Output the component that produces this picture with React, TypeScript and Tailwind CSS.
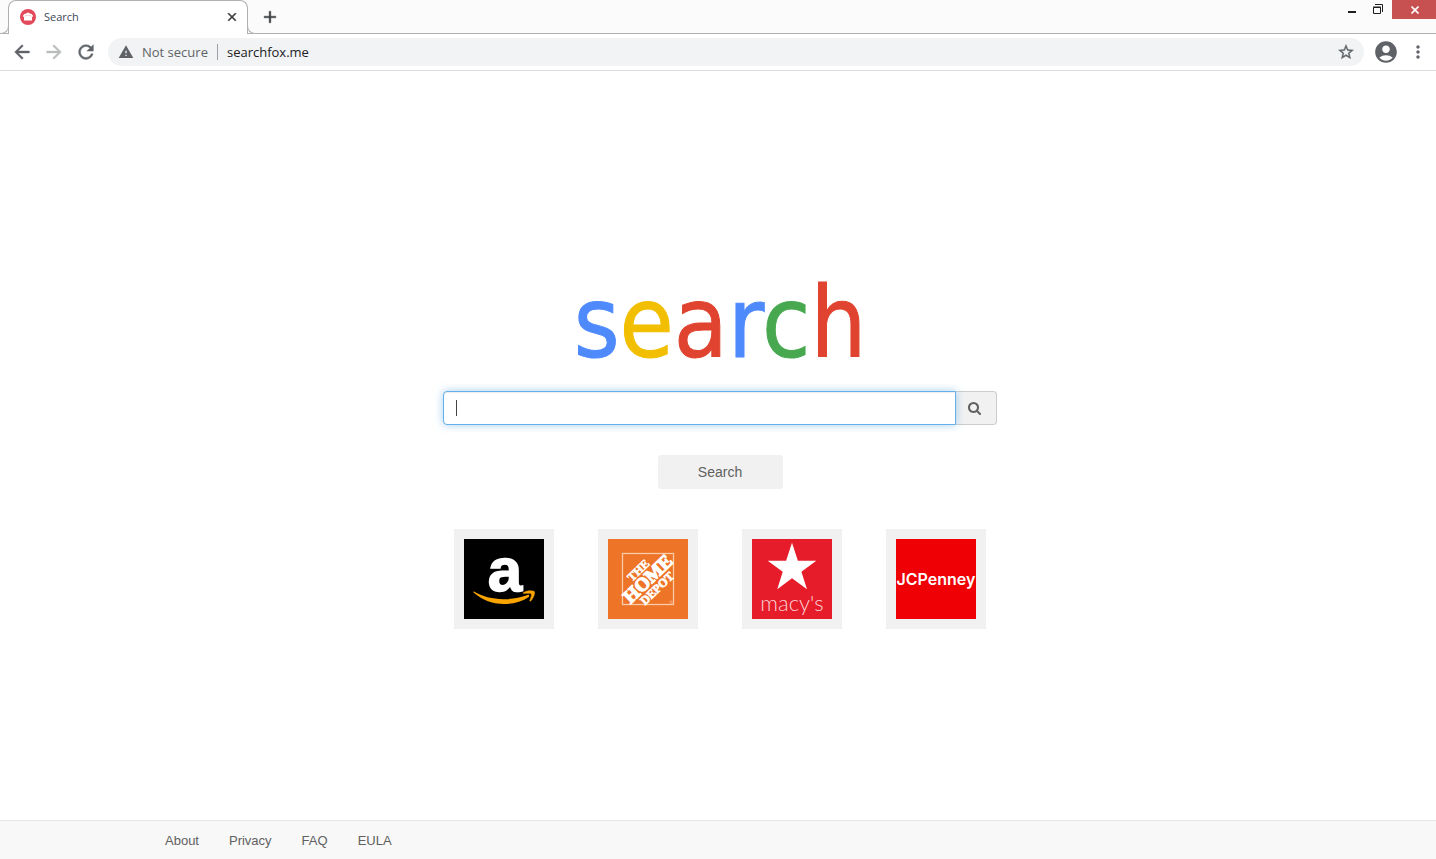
import React from "react";
import { MdAccountCircle, MdMoreVert, MdWarning } from "react-icons/md";

const logoLetters = [
  { char: "s", color: "text-[#4f8afd]" },
  { char: "e", color: "text-[#f2bf00]" },
  { char: "a", color: "text-[#e04430]" },
  { char: "r", color: "text-[#4f8afd]" },
  { char: "c", color: "text-[#48a850]" },
  { char: "h", color: "text-[#e04430]" },
];

const footerLinks = ["About", "Privacy", "FAQ", "EULA"];

const iconPaths = {
  back: "M20 11H7.83l5.59-5.59L12 4l-8 8 8 8 1.41-1.41L7.83 13H20v-2z",
  forward: "M12 4l-1.41 1.41L16.17 11H4v2h12.17l-5.58 5.59L12 20l8-8z",
  reload:
    "M17.65 6.35A7.958 7.958 0 0 0 12 4c-4.42 0-7.99 3.58-7.99 8s3.57 8 7.99 8c3.73 0 6.84-2.55 7.73-6h-2.08A5.99 5.99 0 0 1 12 18c-3.31 0-6-2.69-6-6s2.69-6 6-6c1.66 0 3.14.69 4.22 1.78L13 11h7V4l-2.35 2.35z",
  close:
    "M19 6.41L17.59 5 12 10.59 6.41 5 5 6.41 10.59 12 5 17.59 6.41 19 12 13.41 17.59 19 19 17.59 13.41 12z",
  add: "M19 13h-6v6h-2v-6H5v-2h6V5h2v6h6v2z",
  star: "M22 9.24l-7.19-.62L12 2 9.19 8.63 2 9.24l5.46 4.73L5.82 21 12 17.27 18.18 21l-1.63-7.03L22 9.24zM12 15.4l-3.76 2.27 1-4.28-3.32-2.88 4.38-.38L12 6.1l1.71 4.04 4.38.38-3.32 2.88 1 4.28L12 15.4z",
};

interface IconProps {
  name: keyof typeof iconPaths;
  className?: string;
  weight?: number;
}

// Material shapes, thickened a little by the stroke
const Icon = ({ name, className, weight = 0.5 }: IconProps) => (
  <svg
    viewBox="0 0 24 24"
    className={className}
    fill="currentColor"
    stroke="currentColor"
    strokeWidth={weight}
    aria-hidden="true"
  >
    <path d={iconPaths[name]} />
  </svg>
);

const Favicon = () => (
  <svg viewBox="0 0 16 16" className="size-4 shrink-0" aria-hidden="true">
    <circle cx="8" cy="8" r="8" fill="#e24a5c" />
    <path d="M2.8 7.2 4 5.2 6 4.4 8 3.6l2 .8 2 .8 1.2 2-1.2.8v3.6H4V8z" fill="#fff" />
    <path d="M4.4 7.2 8 6l3.6 1.2" fill="none" stroke="#f3a5ae" strokeWidth=".6" />
  </svg>
);

const SearchIcon = () => (
  <svg viewBox="0 128 1664 1664" className="size-[13px]" fill="currentColor" aria-hidden="true">
    <path d="M1152 832q0-185-131.5-316.5t-316.5-131.5-316.5 131.5-131.5 316.5 131.5 316.5 316.5 131.5 316.5-131.5 131.5-316.5zM1664 1664q0 52-38 90t-90 38q-54 0-90-38l-343-342q-179 124-399 124-143 0-273.5-55.5t-225-150-150-225-55.5-273.5 55.5-273.5 150-225 225-150 273.5-55.5 273.5 55.5 225 150 150 225 55.5 273.5q0 220-124 399l343 343q37 37 37 90z" />
  </svg>
);

const AmazonLogo = () => (
  <svg viewBox="0 0 80 80" className="size-20 overflow-visible bg-black">
    <text
      x="41"
      y="52"
      textAnchor="middle"
      fill="#fff"
      stroke="#fff"
      strokeWidth="1.5"
      className="font-['Liberation_Sans',sans-serif] text-[62px] font-bold"
    >
      a
    </text>
    <path
      d="M10 52.6c8 5 18.5 7.6 29.5 7.6 8 0 16.5-1.4 24-4.2 1.5-.6 2.5.8 1.2 1.9C58 62.8 48.5 65 40 65 28 65 17.5 60.5 9.6 53.5c-.5-.5-.2-1.2.4-.9z"
      fill="#f9a400"
    />
    <path
      d="M59.5 53.6c3-2.2 8.2-2.4 10.6-1.3 1.2 1-.2 6.8-3.4 9.7-.6.4-1.1.1-.9-.5.8-2 2.1-5.5 1.5-6.5-.8-.9-4.8-.7-7.3-.5-.8.1-1.1-.5-.5-.9z"
      fill="#f9a400"
      stroke="#f9a400"
      strokeWidth=".5"
    />
  </svg>
);

const HomeDepotLogo = () => (
  <svg viewBox="0 0 80 80" className="size-20 bg-[#ee7427]">
    <rect x="14.5" y="14.5" width="51" height="51" fill="none" stroke="#f9cba8" strokeWidth="1.3" />
    <g
      transform="rotate(-44 40 40)"
      fill="#fff"
      stroke="#fff"
      textAnchor="middle"
      className="font-['Liberation_Serif',serif] font-bold"
    >
      <text x="39" y="31" strokeWidth=".6" className="text-[12px]">
        THE
      </text>
      <text x="40" y="46" strokeWidth="1.3" className="text-[19px]">
        HOME
      </text>
      <text x="40" y="57" strokeWidth=".7" className="text-[12px]">
        DEPOT
      </text>
    </g>
    <circle cx="63" cy="63" r="1.2" fill="none" stroke="#f9cba8" strokeWidth=".5" />
  </svg>
);

const MacysLogo = () => (
  <svg viewBox="0 0 80 80" className="size-20 bg-[#e61c2a]">
    <path
      d="M40 3.7 45.9 21.7H64.3L49.4 32.7 55 50.3 40 39.3 25.3 50.3 30.7 32.7 15.7 21.7H34.1z"
      fill="#fff"
    />
    <text
      x="40"
      y="72"
      textAnchor="middle"
      fill="#fbd0d3"
      className="font-['Lato',sans-serif] text-[22px] font-light"
    >
      macy's
    </text>
  </svg>
);

const JCPenneyLogo = () => (
  <svg viewBox="0 0 80 80" className="size-20 bg-[#ee0004]">
    <text
      x="40"
      y="46"
      textAnchor="middle"
      fill="#fff"
      className="font-['Inter',sans-serif] text-[16px] font-semibold"
    >
      JCPenney
    </text>
  </svg>
);

const shops = [
  { name: "Amazon", Logo: AmazonLogo },
  { name: "The Home Depot", Logo: HomeDepotLogo },
  { name: "Macy's", Logo: MacysLogo },
  { name: "JCPenney", Logo: JCPenneyLogo },
];

const TabStrip = () => (
  <div className="flex h-[34px] items-start justify-between border-b border-[#b0b0b0] bg-[#fbfbfb]">
    <div className="flex h-[34px]">
      <div className="relative ml-2 flex h-[34px] w-60 items-center rounded-t-lg border border-b-0 border-[#b0b0b0] bg-white pr-2 pb-[2px] pl-[11px]">
        {/* curved feet of the active tab */}
        <span className="absolute bottom-0 -left-2 size-2 rounded-br-lg border-r border-b border-[#b0b0b0] bg-[#fbfbfb]" />
        <span className="absolute -right-2 bottom-0 size-2 rounded-bl-lg border-b border-l border-[#b0b0b0] bg-[#fbfbfb]" />
        <Favicon />
        <span className="ml-2 flex-1 text-[11px] text-[#3c4858]">Search</span>
        <button type="button" aria-label="Close tab" className="text-[#3c4043]">
          <Icon name="close" className="size-[14px]" weight={1} />
        </button>
      </div>
      <button type="button" aria-label="New tab" className="ml-3 self-center text-[#3c4043]">
        <Icon name="add" className="size-5" />
      </button>
    </div>
    <div className="flex items-start">
      <button type="button" aria-label="Minimize" className="flex h-[19px] w-[26px] items-center justify-center pr-[2px]">
        <svg viewBox="0 0 10 10" className="size-[10px]" aria-hidden="true">
          <path d="M1 6h8v2H1z" fill="#1e1e1e" />
        </svg>
      </button>
      <button type="button" aria-label="Restore" className="flex h-[19px] w-[26px] items-center justify-center pr-[2px] pb-[2px]">
        <svg viewBox="0 0 10 10" className="size-[10px]" fill="none" stroke="#1e1e1e" aria-hidden="true">
          <path d="M2 .5h7.5V8" />
          <path d="M.5 3.5h7v6h-7zM0 3h8" />
        </svg>
      </button>
      <button type="button" aria-label="Close" className="flex h-[19px] w-11 items-center justify-center bg-[#c75050] pl-[2px]">
        <svg viewBox="0 0 8 8" className="size-2" aria-hidden="true">
          <path d="m.5.5 7 7m0-7-7 7" stroke="#fff" strokeWidth="1.6" />
        </svg>
      </button>
    </div>
  </div>
);

const Toolbar = () => (
  <div className="flex h-[37px] items-center border-b border-[#dadce0] bg-white pr-2 pl-[11px] text-[#5f6368]">
    <button type="button" aria-label="Back">
      <Icon name="back" className="size-[22px]" />
    </button>
    <button type="button" aria-label="Forward" className="ml-[10px] text-[#babcbe]">
      <Icon name="forward" className="size-[22px]" />
    </button>
    <button type="button" aria-label="Reload" className="ml-[10px]">
      <Icon name="reload" className="size-[22px]" />
    </button>
    <div className="ml-[11px] flex h-7 flex-1 items-center rounded-full bg-[#f1f3f4] pr-[9px] pl-[10px] text-[13px]">
      <MdWarning className="size-4" />
      <span className="ml-2">Not secure</span>
      <span className="mx-[9px] h-4 w-px bg-[#9aa0a6]" />
      <input
        type="text"
        aria-label="Address"
        defaultValue="searchfox.me"
        className="min-w-0 flex-1 bg-transparent text-[#202124] outline-none"
      />
      <button type="button" aria-label="Bookmark this page">
        <Icon name="star" className="size-[18px]" />
      </button>
    </div>
    <button type="button" aria-label="Profile" className="ml-[9px]">
      <MdAccountCircle className="size-[26px]" />
    </button>
    <button type="button" aria-label="Menu" className="ml-[9px]">
      <MdMoreVert className="size-5" />
    </button>
  </div>
);

const App = () => {
  return (
    <div className="flex min-h-screen flex-col bg-white font-['Liberation_Sans',Arial,sans-serif] text-sm text-[#606060]">
      <header className="font-['Open_Sans',sans-serif]">
        <TabStrip />
        <Toolbar />
      </header>

      <main className="flex flex-1 flex-col items-center justify-center pl-1">
        <h1 className="mb-[6px] font-['DejaVu_Sans_Condensed','DejaVu_Sans',sans-serif] text-[98px] leading-[123px] [-webkit-text-stroke:1px]">
          {logoLetters.map(({ char, color }, index) => (
            <span key={index} className={color}>
              {char}
            </span>
          ))}
        </h1>

        <form
          className="flex w-full max-w-[554px] flex-col items-center"
          onSubmit={(e) => e.preventDefault()}
        >
          <div className="relative flex h-[34px] w-full">
            <input
              type="text"
              aria-label="Search the web"
              className="relative z-10 min-w-0 flex-1 rounded-l border border-[#66afe9] bg-white px-3 shadow-[inset_0_1px_1px_rgba(0,0,0,0.075),0_0_8px_rgba(102,175,233,0.6)] outline-none"
            />
            <span className="absolute top-[9px] left-[13px] z-20 h-4 w-px bg-[#444444]" />
            <button
              type="submit"
              aria-label="Submit search"
              className="flex w-[41px] items-center justify-center rounded-r border border-l-0 border-[#cccccc] bg-[#f1f1f1] pr-1"
            >
              <SearchIcon />
            </button>
          </div>
          <button type="submit" className="mt-[30px] h-[34px] w-[125px] rounded-[3px] bg-[#f1f1f1]">
            Search
          </button>
        </form>

        <div className="mt-10 flex gap-11">
          {shops.map(({ name, Logo }) => (
            <a key={name} href="#" aria-label={name} className="bg-[#f1f1f1] p-[10px]">
              <Logo />
            </a>
          ))}
        </div>
      </main>

      <footer className="border-t border-[#e7e7e7] bg-[#f8f8f8]">
        <nav className="mx-auto flex h-[38px] max-w-[1170px] items-center gap-[30px] px-8 pt-[2px] text-[13px]">
          {footerLinks.map((link) => (
            <a key={link} href="#">
              {link}
            </a>
          ))}
        </nav>
      </footer>
    </div>
  );
};

export default App;
